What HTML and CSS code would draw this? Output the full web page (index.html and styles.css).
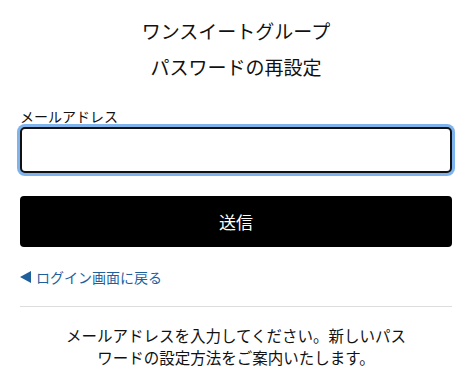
FILE: index.html
```html
<!DOCTYPE html>
<html lang="ja">
<head>
    <meta charset="UTF-8">
    <meta name="viewport" content="width=device-width, initial-scale=1.0">
    <title>パスワードの再設定</title>
    <link rel="stylesheet" href="styles.css">
</head>
<body>
    <div class="wrap">
        <!-- 見出し -->
        <h1 class="title">ワンスイートグループ</h1>
        <h2 class="title">パスワードの再設定</h2>

        <!-- 入力フォーム -->
        <form class="form">
            <label class="label" for="email">メールアドレス</label>
            <input type="email" id="email" class="input">
            <button type="button" class="btn">送信</button>
        </form>

        <a href="#" class="back"><span class="arrow"></span>ログイン画面に戻る</a>

        <hr class="line">

        <p class="note">メールアドレスを入力してください。新しいパス<br>ワードの設定方法をご案内いたします。</p>
    </div>
</body>
</html>
```

FILE: styles.css
```css
body{
    margin: 0;
    background: #fff;
    color: #111;
    font-family: "Noto Sans CJK JP", "Noto Sans", sans-serif;
}

.wrap{
    padding: 13px 18px 0 20px;
}

.title{
    margin: 0;
    font-size: 19px;
    font-weight: normal;
    line-height: 36px;
    text-align: center;
}

.form{
    margin-top: 21px;
    display: flex;
    flex-direction: column;
}

.label{
    font-size: 14px;
    line-height: 20px;
    margin-bottom: 1px;
}

.input{
    box-sizing: border-box;
    height: 46px;
    margin: 0;
    border: 2px solid #111;
    border-radius: 5px;
    box-shadow: 0 0 0 3px #7fb3ec;
    outline: none;
    font-size: 16px;
}

.btn{
    margin-top: 23px;
    height: 51px;
    border: none;
    border-radius: 4px;
    background: #000;
    color: #fff;
    font-family: inherit;
    font-size: 17px;
}

.back{
    display: flex;
    align-items: center;
    margin-top: 20px;
    color: #1f5f9c;
    font-size: 14px;
    line-height: 20px;
    text-decoration: none;
}

.arrow{
    width: 0;
    height: 0;
    border-top: 6px solid transparent;
    border-bottom: 6px solid transparent;
    border-right: 11px solid #1f5f9c;
    margin-right: 5px;
}

.line{
    margin: 19px 0 0;
    border: none;
    border-top: 1px solid #ddd;
}

.note{
    margin: 17px 0 0;
    font-size: 15.5px;
    line-height: 22px;
    text-align: center;
}
```
